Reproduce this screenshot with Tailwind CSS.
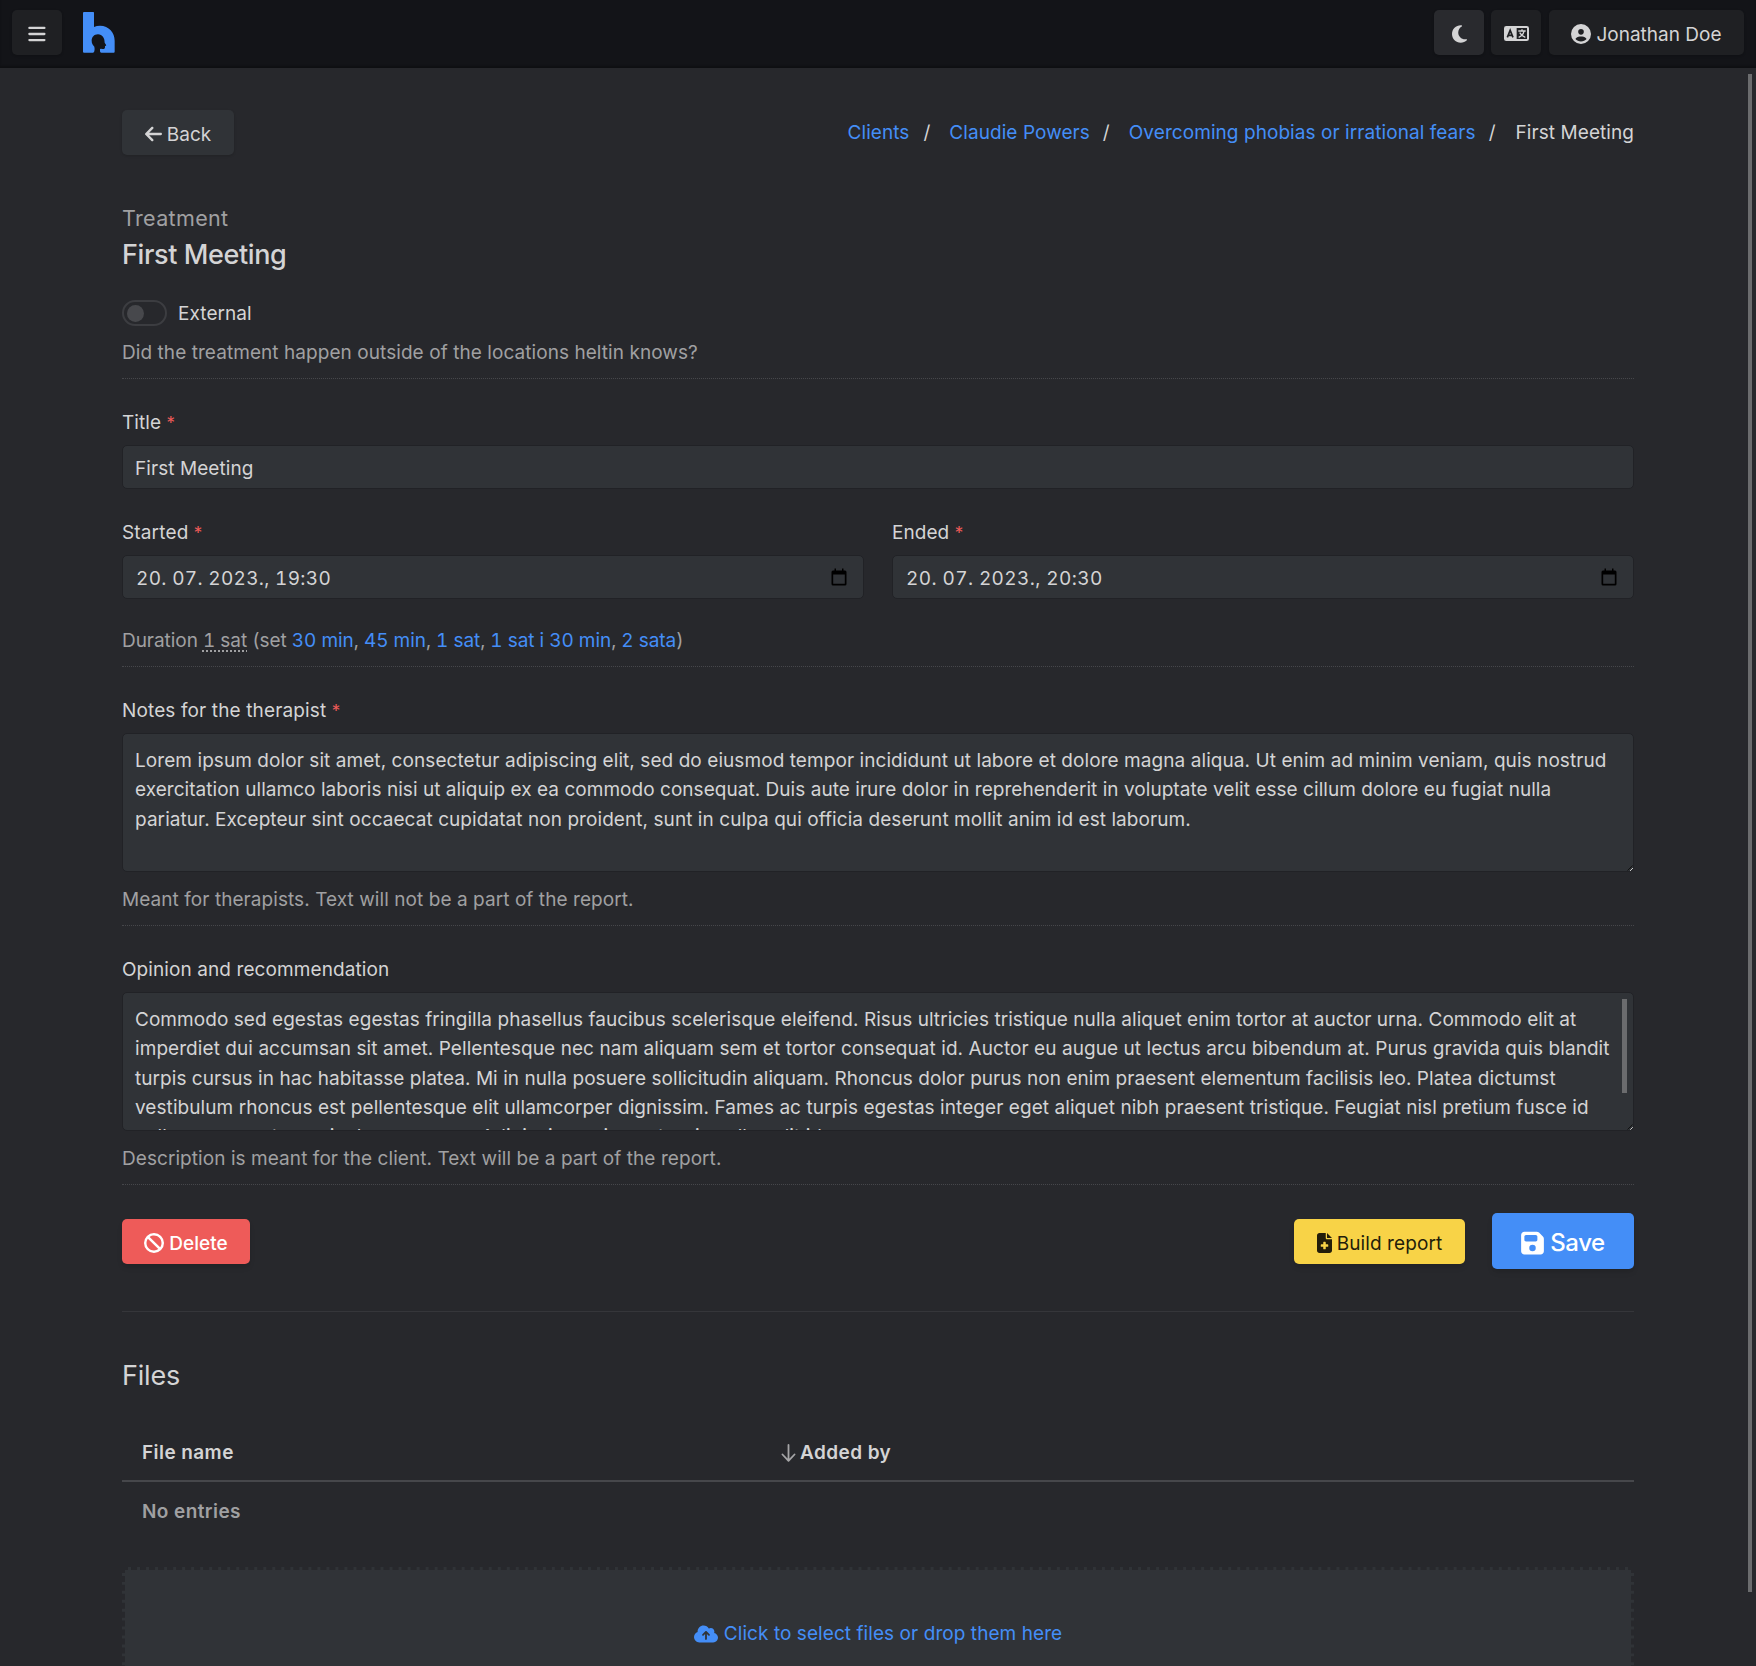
<!DOCTYPE html>
<html lang="en">
<head>
<meta charset="utf-8">
<title>First Meeting</title>
<script src="https://cdn.jsdelivr.net/npm/@tailwindcss/browser@4"></script>
</head>
<body class="relative h-[1666px] overflow-hidden bg-[#27282c] font-['Inter',sans-serif] text-[19px] leading-[30px] tracking-[0.065px] text-[#d4d4d5]">
<header class="flex h-[68px] items-start bg-[#131418] pl-3 pr-3 pt-2.5 shadow-[inset_0_-2px_2px_rgba(0,0,0,0.25)]">
  <button class="flex h-[45px] w-[50px] items-center justify-center rounded-[5px] bg-[#1f2023] pt-0.5 shadow-sm">
    <svg class="h-4 w-[18px]" viewBox="0 0 18 16" stroke="currentColor" stroke-width="2.3" stroke-linecap="round"><path d="M1.4 1.9H16.4M1.4 8H16.4M1.4 14.1H16.4"/></svg>
  </button>
  <svg class="ml-[21px] mt-0.5 h-[41px] w-8" viewBox="0 0 96 123" fill="#448ef7"><path d="M2 0H31q2 0 2 2V45q8-4 18-4C78 41 95 62 95 86V119q0 3-3 3H55q-4 0-4-4v-7l3-1q8 2 10 0q2-1 2-4v-4l3-1q1-1 0-3l-4-6C65 78 58 67 45 67C33 67 26 76 26 86C26 95 30 99 34 104q2 8 0 14q-1 4-4 4H3q-3 0-3-3V2z"/></svg>
  <div class="ml-auto flex gap-[7px]">
    <button class="flex h-[45px] w-[50px] items-center justify-center rounded-[5px] bg-[#292a2e] pt-0.5 shadow-sm">
      <svg class="h-5 w-[15px]" viewBox="0 0 384 512" fill="currentColor"><path d="M223.5 32C100 32 0 132.3 0 256S100 480 223.5 480c60.6 0 115.5-24.2 155.8-63.4c5-4.9 6.3-12.5 3.1-18.7s-10.1-9.7-17-8.5c-9.8 1.7-19.8 2.6-30.1 2.6c-96.9 0-175.5-78.8-175.5-176c0-65.8 36-123.1 89.3-153.3c6.1-3.5 9.2-10.5 7.7-17.3s-7.3-11.9-14.3-12.5c-6.3-.5-12.6-.8-19-.8z"/></svg>
    </button>
    <button class="flex h-[45px] w-[50px] items-center justify-center rounded-[5px] bg-[#1f2023] pt-0.5 shadow-sm">
      <svg class="h-[15px] w-[25px]" viewBox="0 0 75 45"><rect width="75" height="45" rx="7" fill="#d4d4d5"/><rect x="38" y="6" width="31" height="33" fill="#1f2023"/><path d="M10 34L18.5 13L27 34M13 28H24" fill="none" stroke="#1f2023" stroke-width="5"/><path d="M43 15H65M54 10V15M60 16Q57 28 44 34M47 20Q53 30 64 34" fill="none" stroke="#d4d4d5" stroke-width="4"/></svg>
    </button>
    <button class="ml-px flex h-[45px] w-[195px] items-center justify-center gap-[5px] rounded-[5px] bg-[#1f2023] pt-[3px] shadow-sm">
      <svg class="size-5" viewBox="0 0 512 512" fill="currentColor"><path d="M399 384.2C376.9 345.8 335.4 320 288 320H224c-47.4 0-88.9 25.8-111 64.2c35.2 39.2 86.2 63.8 143 63.8s107.8-24.7 143-63.8zM0 256a256 256 0 1 1 512 0A256 256 0 1 1 0 256zm256 16a72 72 0 1 0 0-144 72 72 0 1 0 0 144z"/></svg>
      <span class="pt-px tracking-normal">Jonathan Doe</span>
    </button>
  </div>
</header>
<main class="mx-[122px] flex flex-col pt-[42px]">
  <div class="flex h-[45px] items-center justify-between">
    <button class="flex h-[45px] w-28 items-center justify-center gap-[5px] rounded-[5px] bg-[#303337] pt-[3px] shadow-sm">
      <svg class="h-5 w-[17px]" viewBox="0 0 448 512" fill="currentColor"><path d="M9.4 233.4c-12.5 12.5-12.5 32.8 0 45.3l160 160c12.5 12.5 32.8 12.5 45.3 0s12.5-32.8 0-45.3L109.2 288 416 288c17.7 0 32-14.3 32-32s-14.3-32-32-32l-306.7 0L214.6 118.6c12.5-12.5 12.5-32.8 0-45.3s-32.8-12.5-45.3 0l-160 160z"/></svg>
      <span class="pt-px">Back</span>
    </button>
    <nav class="flex pt-px">
      <a class="text-[#448ef7]">Clients</a><span class="ml-[14px] mr-[19px]">/</span>
      <a class="text-[#448ef7]">Claudie Powers</a><span class="ml-[13px] mr-[19px]">/</span>
      <a class="text-[#448ef7]">Overcoming phobias or irrational fears</a><span class="ml-[13px] mr-5">/</span>
      <span>First Meeting</span>
    </nav>
  </div>
  <p class="mt-12 text-[21.5px] tracking-[0.35px] text-[#a0a0a2]">Treatment</p>
  <h1 class="mt-1 text-[27px] font-medium leading-9 tracking-[-0.38px]">First Meeting</h1>
  <label class="mt-[27px] flex h-[26px] items-center gap-[11px]">
    <span class="flex h-[26px] w-[45px] items-center rounded-full border-2 border-[#3c3d41] pl-[3px]"><span class="size-[17px] rounded-full bg-[#47484c]"></span></span>
    <span class="pt-0.5">External</span>
  </label>
  <p class="mt-3 text-[#a0a0a2]">Did the treatment happen outside of the locations heltin knows?</p>
  <div class="mt-2.5 border-t border-dotted border-[#46474b]"></div>
  <div class="mt-[29px] h-[30px]">Title <span class="text-[17px] text-[#ee5b59]">*</span></div>
  <div class="mt-[7px] flex h-11 items-center rounded-[5px] border border-[#212226] bg-[#303337] pl-3 pt-[3px]">First Meeting</div>
  <div class="mt-[29px] grid grid-cols-2 gap-x-7">
    <div>
      <div class="h-[30px]"><span class="tracking-[0.15px]">Started</span> <span class="text-[17px] text-[#ee5b59]">*</span></div>
      <div class="mt-[7px] flex h-11 items-center justify-between rounded-[5px] border border-[#212226] bg-[#303337] pl-[13px] pr-4"><span class="pt-[3px] tracking-[0.32px] tabular-nums">20. 07. 2023., 19:30</span>
        <svg class="h-[18px] w-4" viewBox="0 0 16 18"><path d="M3.5 0.5h1.5v2h6v-2h1.5v2H14a1.5 1.5 0 0 1 1.5 1.5v12A1.5 1.5 0 0 1 14 17.5H2A1.5 1.5 0 0 1 .5 16V4A1.5 1.5 0 0 1 2 2.5h1.5zM2.2 6.5v9.3h11.6V6.5z" fill="#000" fill-rule="evenodd"/></svg></div>
    </div>
    <div>
      <div class="h-[30px]">Ended <span class="text-[17px] text-[#ee5b59]">*</span></div>
      <div class="mt-[7px] flex h-11 items-center justify-between rounded-[5px] border border-[#212226] bg-[#303337] pl-[13px] pr-4"><span class="pt-[3px] tracking-[0.4px] tabular-nums">20. 07. 2023., 20:30</span>
        <svg class="h-[18px] w-4" viewBox="0 0 16 18"><path d="M3.5 0.5h1.5v2h6v-2h1.5v2H14a1.5 1.5 0 0 1 1.5 1.5v12A1.5 1.5 0 0 1 14 17.5H2A1.5 1.5 0 0 1 .5 16V4A1.5 1.5 0 0 1 2 2.5h1.5zM2.2 6.5v9.3h11.6V6.5z" fill="#000" fill-rule="evenodd"/></svg></div>
    </div>
  </div>
  <p class="mt-[27px] tracking-[-0.04px] tabular-nums text-[#a0a0a2]">Duration <span class="underline decoration-dotted underline-offset-4">1 sat</span> (set <a class="text-[#448ef7]">30 min</a>, <a class="text-[#448ef7]">45 min</a>, <a class="text-[#448ef7]">1 sat</a>, <a class="text-[#448ef7]">1 sat i 30 min</a>, <a class="text-[#448ef7]">2 sata</a>)</p>
  <div class="mt-2.5 border-t border-dotted border-[#46474b]"></div>
  <div class="mt-[29px] h-[30px]"><span class="tracking-[0.13px]">Notes for the therapist</span> <span class="text-[17px] text-[#ee5b59]">*</span></div>
  <div class="relative mt-[7px] h-[139px] whitespace-nowrap rounded-[5px] border border-[#212226] bg-[#303337] px-3 pt-3 leading-[29.25px]"><span class="tracking-[0.07px]">Lorem ipsum dolor sit amet, consectetur adipiscing elit, sed do eiusmod tempor incididunt ut labore et dolore magna aliqua. Ut enim ad minim veniam, quis nostrud</span><br><span class="tracking-[0.04px]">exercitation ullamco laboris nisi ut aliquip ex ea commodo consequat. Duis aute irure dolor in reprehenderit in voluptate velit esse cillum dolore eu fugiat nulla</span><br>pariatur. Excepteur sint occaecat cupidatat non proident, sunt in culpa qui officia deserunt mollit anim id est laborum.
    <svg class="absolute bottom-0 right-0 size-[6px]" viewBox="0 0 6 6"><path d="M0.5 5.5L5.5 0.5" stroke="#111"/><path d="M3 6L6 3" stroke="#ccc"/></svg>
  </div>
  <p class="mt-[13px] text-[#a0a0a2]">Meant for therapists. Text will not be a part of the report.</p>
  <div class="mt-2.5 border-t border-dotted border-[#46474b]"></div>
  <div class="mt-[29px] tracking-[0.09px]">Opinion and recommendation</div>
  <div class="relative mt-[7px] h-[139px] overflow-hidden whitespace-nowrap rounded-[5px] border border-[#212226] bg-[#303337] px-3 pt-3 leading-[29.25px]"><span class="tracking-[0.05px]">Commodo sed egestas egestas fringilla phasellus faucibus scelerisque eleifend. Risus ultricies tristique nulla aliquet enim tortor at auctor urna. Commodo elit at</span><br>imperdiet dui accumsan sit amet. Pellentesque nec nam aliquam sem et tortor consequat id. Auctor eu augue ut lectus arcu bibendum at. Purus gravida quis blandit<br><span class="tracking-[0.05px]">turpis cursus in hac habitasse platea. Mi in nulla posuere sollicitudin aliquam. Rhoncus dolor purus non enim praesent elementum facilisis leo. Platea dictumst</span><br>vestibulum rhoncus est pellentesque elit ullamcorper dignissim. Fames ac turpis egestas integer eget aliquet nibh praesent tristique. Feugiat nisl pretium fusce id<br>nulla consequat mauris donec massa. Adipiscing enim eu turpis nulla velit id.
    <div class="absolute right-[6px] top-[6px] h-[94px] w-[5px] bg-[#6b6c6e]"></div>
    <svg class="absolute bottom-0 right-0 size-[6px]" viewBox="0 0 6 6"><path d="M0.5 5.5L5.5 0.5" stroke="#111"/><path d="M3 6L6 3" stroke="#ccc"/></svg>
  </div>
  <p class="mt-[13px] text-[#a0a0a2]">Description is meant for the client. Text will be a part of the report.</p>
  <div class="mt-2.5 border-t border-dotted border-[#46474b]"></div>
  <div class="mt-7 flex h-14 items-center">
    <button class="flex h-[45px] w-32 items-center justify-center gap-[5px] rounded-[5px] bg-[#ee5b59] pt-1 font-medium text-white shadow-md">
      <svg class="size-5" viewBox="0 0 512 512" fill="currentColor"><path d="M367.2 412.5L99.5 144.8C77.1 176.1 64 214.5 64 256c0 106 86 192 192 192c41.5 0 79.9-13.1 111.2-35.5zm45.3-45.3C434.9 335.9 448 297.5 448 256c0-106-86-192-192-192c-41.5 0-79.9 13.1-111.2 35.5L412.5 367.2zM0 256a256 256 0 1 1 512 0A256 256 0 1 1 0 256z"/></svg>
      <span class="pt-px">Delete</span></button>
    <button class="ml-auto flex h-[45px] w-[171px] items-center justify-center gap-[5px] rounded-[5px] bg-[#f8d347] pt-1 tracking-[0.1px] text-[#231d0a] shadow-md">
      <svg class="h-5 w-[15px]" viewBox="0 0 384 512" fill="currentColor"><path d="M64 0C28.7 0 0 28.7 0 64V448c0 35.3 28.7 64 64 64H320c35.3 0 64-28.7 64-64V160H256c-17.7 0-32-14.3-32-32V0H64zM256 0V128H384L256 0zM160 240c0-8.8 7.2-16 16-16h32c8.8 0 16 7.2 16 16v48h48c8.8 0 16 7.2 16 16v32c0 8.8-7.2 16-16 16H224v48c0 8.8-7.2 16-16 16H176c-8.8 0-16-7.2-16-16V352H112c-8.8 0-16-7.2-16-16V304c0-8.8 7.2-16 16-16h48V240z"/></svg>
      <span class="pt-px">Build report</span></button>
    <button class="ml-[27px] flex h-14 w-[142px] items-center justify-center gap-1.5 rounded-[5px] bg-[#448ef7] pt-[3px] text-[24px] font-medium tracking-[-0.4px] text-white shadow-md">
      <svg class="h-[26px] w-[23px]" viewBox="0 0 448 512" fill="currentColor"><path d="M64 32C28.7 32 0 60.7 0 96V416c0 35.3 28.7 64 64 64H384c35.3 0 64-28.7 64-64V173.3c0-17-6.7-33.3-18.7-45.3L352 50.7C340 38.7 323.7 32 306.7 32H64zm0 96c0-17.7 14.3-32 32-32H288c17.7 0 32 14.3 32 32v64c0 17.7-14.3 32-32 32H96c-17.7 0-32-14.3-32-32V128zM224 288a64 64 0 1 1 0 128 64 64 0 1 1 0-128z"/></svg>
      <span class="pt-px">Save</span></button>
  </div>
  <div class="mt-[42px] border-t border-[#35363a]"></div>
  <h2 class="mt-[46px] text-[27px] leading-9 tracking-[-0.2px]">Files</h2>
  <div class="mt-11 grid grid-cols-[639px_1fr] border-b-2 border-[#46474b] px-5 pb-3 font-semibold tracking-[0.42px]"><span>File name</span><span class="flex items-center gap-1">
    <svg class="h-[18px] w-[15px]" viewBox="0 0 15 18" fill="none" stroke="#a5a5a7" stroke-width="1.8" stroke-linecap="round" stroke-linejoin="round"><path d="M7.5 1V16.5M1.5 10.5L7.5 16.8L13.5 10.5"/></svg>
    Added by</span></div>
  <p class="mt-[15px] pl-5 font-semibold tracking-[0.42px] text-[#a0a0a2]">No entries</p>
  <div class="mt-10 flex h-[140px] items-start justify-center gap-[6px] border-[3px] border-dashed border-[#27282c] bg-[#303337] pt-[49px] text-[#448ef7]">
    <svg class="mt-[5px] h-5 w-6" viewBox="0 0 640 512" fill="currentColor"><path d="M144 480C64.5 480 0 415.5 0 336c0-62.8 40.2-116.2 96.2-135.9c-.1-2.7-.2-5.4-.2-8.1c0-88.4 71.6-160 160-160c59.3 0 111 32.2 138.7 80.2C409.9 102 428.3 96 448 96c53 0 96 43 96 96c0 12.2-2.3 23.8-6.4 34.6C596 238.4 640 290.1 640 352c0 70.7-57.3 128-128 128H144zm79-217c-9.4 9.4-9.4 24.6 0 33.9s24.6 9.4 33.9 0l39-39V392c0 13.3 10.7 24 24 24s24-10.7 24-24V257.9l39 39c9.4 9.4 24.6 9.4 33.9 0s9.4-24.6 0-33.9l-80-80c-9.4-9.4-24.6-9.4-33.9 0l-80 80z"/></svg>
    <span>Click to select files or drop them here</span></div>
</main>
<div class="absolute left-[1748px] top-[74px] h-[1518px] w-1 bg-[#6b6c6e]"></div>
</body>
</html>
